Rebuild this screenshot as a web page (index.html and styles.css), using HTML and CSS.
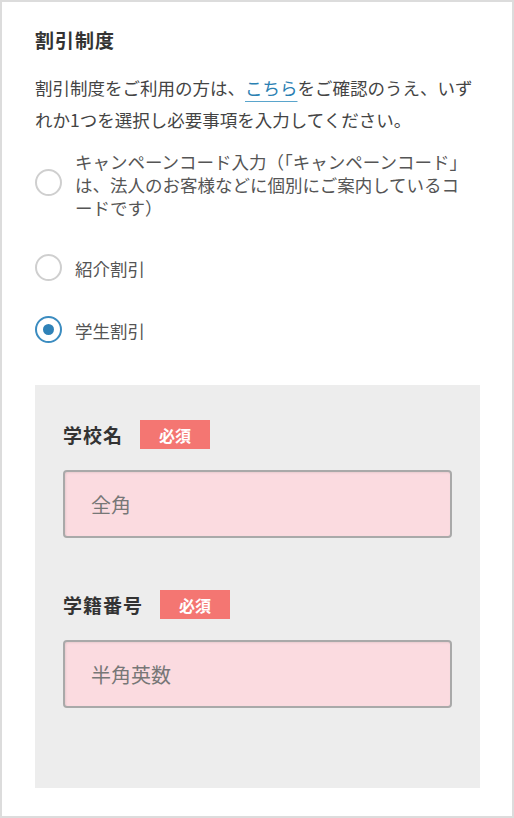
FILE: index.html
```html
<!DOCTYPE html>
<html lang="ja">
<head>
<meta charset="utf-8">
<title>割引制度</title>
<link rel="stylesheet" href="styles.css">
</head>
<body>
<div class="card">
  <h2 class="title">割引制度</h2>
  <p class="lead">割引制度をご利用の方は、<a class="link" href="#">こちら</a>をご確認のうえ、いず<br>れか1つを選択し必要事項を入力してください。</p>
  <div class="radios">
    <label class="radio-row">
      <span class="radio"></span>
      <span class="radio-label">キャンペーンコード入力（「キャンペーンコード」は、法人のお客様などに個別にご案内しているコードです）</span>
    </label>
    <label class="radio-row">
      <span class="radio"></span>
      <span class="radio-label">紹介割引</span>
    </label>
    <label class="radio-row">
      <span class="radio checked"></span>
      <span class="radio-label">学生割引</span>
    </label>
  </div>
  <div class="panel">
    <div class="field">
      <div class="field-head"><span class="field-name">学校名</span><span class="badge">必須</span></div>
      <div class="input"><span class="placeholder">全角</span></div>
    </div>
    <div class="field">
      <div class="field-head"><span class="field-name">学籍番号</span><span class="badge">必須</span></div>
      <div class="input"><span class="placeholder">半角英数</span></div>
    </div>
  </div>
</div>
</body>
</html>
```

FILE: styles.css
```css
* { box-sizing: border-box; }
html, body { margin: 0; padding: 0; background: #ffffff; }
body {
  font-family: "Noto Sans CJK JP", "Noto Sans", sans-serif;
  color: #444;
}
.card {
  width: 514px;
  height: 818px;
  border: 2px solid #dcdcdc;
  background: #fff;
  padding: 24px 33px 0 33px;
}
.title {
  margin: 0;
  font-size: 19px;
  line-height: 28px;
  font-weight: 700;
  letter-spacing: 1px;
  color: #333;
}
.lead {
  margin: 18px 0 0;
  font-size: 17.5px;
  line-height: 32px;
  color: #444;
}
.link {
  color: #2a80b2;
  text-decoration: underline;
  text-decoration-color: #5aa5cc;
  text-underline-offset: 6px;
  text-decoration-thickness: 1px;
}
.radios {
  margin-top: 14px;
  display: flex;
  flex-direction: column;
  gap: 37px;
}
.radio-row {
  display: flex;
  align-items: center;
  gap: 13px;
}
.radio {
  flex: none;
  width: 27px;
  height: 27px;
  border-radius: 50%;
  border: 2px solid #cfcfcf;
  background: #fff;
  display: flex;
  align-items: center;
  justify-content: center;
  margin-top: -4px;
}
.radio-row:nth-child(n+2) .radio { margin-top: -2px; }
.radio.checked { border-color: #3b8cc0; }
.radio.checked::after {
  content: "";
  width: 11px;
  height: 11px;
  border-radius: 50%;
  background: #2f82b8;
}
.radio-label {
  max-width: 398px;
  font-size: 17.5px;
  line-height: 23px;
  color: #555;
}
.panel {
  margin-top: 42px;
  width: 445px;
  background: #ededed;
  padding: 35px 28px 80px;
}
.field + .field { margin-top: 52px; }
.field-head {
  display: flex;
  align-items: center;
  height: 29px;
}
.field-name {
  font-size: 19px;
  font-weight: 700;
  letter-spacing: 1px;
  color: #333;
}
.badge {
  margin-left: 17px;
  width: 70px;
  height: 29px;
  background: #f47672;
  color: #fff;
  font-weight: 700;
  font-size: 16px;
  display: flex;
  align-items: center;
  justify-content: center;
}
.input {
  margin-top: 21px;
  height: 68px;
  border: 2px solid #a9a9a9;
  border-radius: 4px;
  background: #fbdbe0;
  box-shadow: inset 1px 1px 2px rgba(0,0,0,0.08);
  display: flex;
  align-items: center;
  padding-left: 26px;
}
.placeholder {
  font-size: 20px;
  color: #777;
}
```
